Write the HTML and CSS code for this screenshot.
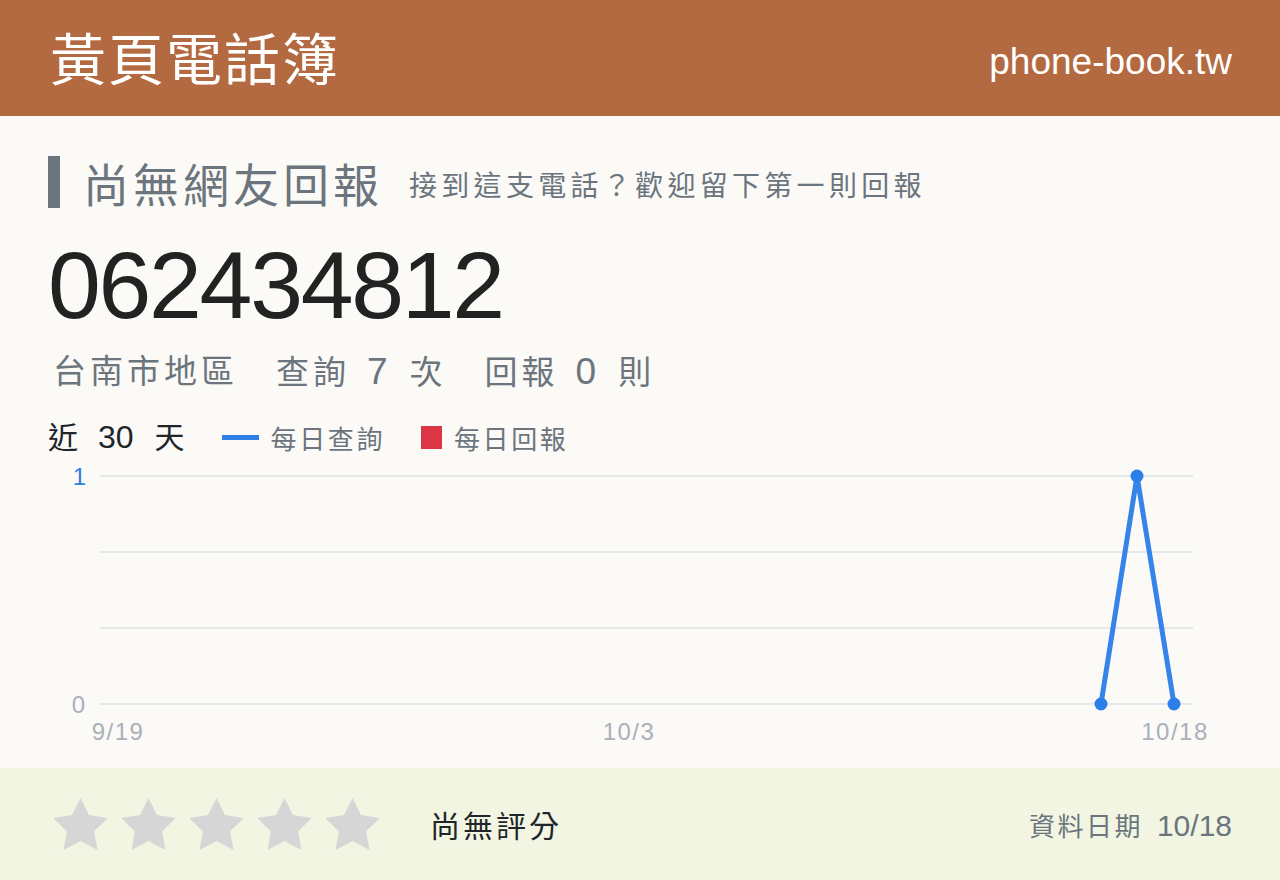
FILE: index.html
```html
<!DOCTYPE html>
<html lang="zh-Hant">
<head>
    <meta charset="UTF-8">
    <meta name="viewport" content="width=device-width, initial-scale=1.0">
    <title>062434812 - 黃頁電話簿</title>
    <link rel="stylesheet" href="styles.css">
</head>
<body>
    <!-- Site header -->
    <header class="topbar">
        <div class="brand">黃頁電話簿</div>
        <div class="domain">phone-book.tw</div>
    </header>

    <main class="content">
        <div class="headline">
            <span class="headline-bar"></span>
            <h1 class="headline-title">尚無網友回報</h1>
            <span class="headline-sub">接到這支電話？歡迎留下第一則回報</span>
        </div>

        <div class="number">062434812</div>

        <div class="stats">
            <span>台南市地區</span>
            <span>查詢<b class="num">7</b>次</span>
            <span>回報<b class="num">0</b>則</span>
        </div>

        <div class="legend">
            <span class="range">近<b class="num">30</b>天</span>
            <span class="legend-item"><i class="swatch-line"></i>每日查詢</span>
            <span class="legend-item"><i class="swatch-box"></i>每日回報</span>
        </div>

        <!-- Daily lookups, last 30 days -->
        <svg class="chart" width="1184" height="308" viewBox="0 0 1184 308">
            <g class="grid">
                <line x1="52" y1="16" x2="1145" y2="16"></line>
                <line x1="52" y1="92" x2="1145" y2="92"></line>
                <line x1="52" y1="168" x2="1145" y2="168"></line>
                <line x1="52" y1="244" x2="1145" y2="244"></line>
            </g>
            <text class="y-label y-max" x="38" y="25">1</text>
            <text class="y-label" x="37" y="253">0</text>
            <text class="x-label" x="70" y="280">9/19</text>
            <text class="x-label" x="581" y="280">10/3</text>
            <text class="x-label" x="1127" y="280">10/18</text>
            <polyline class="series" points="1053,244 1089,16 1126,244"></polyline>
            <circle class="dot" cx="1053" cy="244" r="6.5"></circle>
            <circle class="dot" cx="1089" cy="16" r="6.5"></circle>
            <circle class="dot" cx="1126" cy="244" r="6.5"></circle>
        </svg>
    </main>

    <!-- Rating bar -->
    <footer class="rating">
        <div class="stars">
            <svg class="star" viewBox="2 2 20 19.02"><path d="M12 2l3.09 6.26L22 9.27l-5 4.87 1.18 6.88L12 17.77l-6.18 3.25L7 14.14 2 9.27l6.91-1.01L12 2z"/></svg>
            <svg class="star" viewBox="2 2 20 19.02"><path d="M12 2l3.09 6.26L22 9.27l-5 4.87 1.18 6.88L12 17.77l-6.18 3.25L7 14.14 2 9.27l6.91-1.01L12 2z"/></svg>
            <svg class="star" viewBox="2 2 20 19.02"><path d="M12 2l3.09 6.26L22 9.27l-5 4.87 1.18 6.88L12 17.77l-6.18 3.25L7 14.14 2 9.27l6.91-1.01L12 2z"/></svg>
            <svg class="star" viewBox="2 2 20 19.02"><path d="M12 2l3.09 6.26L22 9.27l-5 4.87 1.18 6.88L12 17.77l-6.18 3.25L7 14.14 2 9.27l6.91-1.01L12 2z"/></svg>
            <svg class="star" viewBox="2 2 20 19.02"><path d="M12 2l3.09 6.26L22 9.27l-5 4.87 1.18 6.88L12 17.77l-6.18 3.25L7 14.14 2 9.27l6.91-1.01L12 2z"/></svg>
        </div>
        <div class="rating-text">尚無評分</div>
        <div class="updated">資料日期<span class="updated-date">10/18</span></div>
    </footer>
</body>
</html>
```

FILE: styles.css
```css
/* General */
body {
    margin: 0;
    width: 1280px;
    height: 880px;
    overflow: hidden;
    background: #fbfaf7;
    color: #212529;
    font-family: 'Liberation Sans', 'Noto Sans CJK TC', sans-serif;
    display: flex;
    flex-direction: column;
}

/* Header */
.topbar {
    height: 116px;
    flex-shrink: 0;
    background: #b46a41;
    color: #fff;
    display: flex;
    align-items: center;
    justify-content: space-between;
    padding: 0 48px 0 50px;
}
.brand {
    font-family: 'Noto Sans CJK TC', sans-serif;
    font-size: 56px;
    letter-spacing: 2px;
    line-height: 1;
    margin-top: -4px;
}
.domain {
    font-size: 37px;
    line-height: 1;
    margin-top: 6px;
}

/* Main block */
.content {
    flex: 1;
    min-height: 0;
    padding: 0 48px;
}
.headline {
    display: flex;
    align-items: center;
    height: 52px;
    margin-top: 40px;
    color: #6c757d;
}
.headline-bar {
    width: 12px;
    height: 52px;
    background: #6c757d;
    margin-right: 23px;
}
.headline-title {
    margin: 0 26px 0 0;
    font-family: 'Noto Sans CJK TC', sans-serif;
    font-weight: normal;
    font-size: 46px;
    letter-spacing: 4px;
    line-height: 1;
}
.headline-sub {
    font-family: 'Noto Sans CJK TC', sans-serif;
    font-size: 28px;
    letter-spacing: 4.3px;
    line-height: 1;
    margin-top: 4px;
}

.number {
    font-size: 95px;
    line-height: 1;
    letter-spacing: -2.3px;
    margin-top: 30px;
    color: #222;
}

.stats {
    display: flex;
    align-items: center;
    height: 40px;
    gap: 38px;
    margin-top: 19px;
    padding-left: 5px;
    font-size: 33px;
    line-height: 40px;
    letter-spacing: 4px;
    color: #6c757d;
}
.num {
    font-weight: normal;
    font-size: 37px;
    margin: 0 18px 0 17px;
}

/* Chart legend */
.legend {
    display: flex;
    align-items: center;
    height: 36px;
    margin-top: 27px;
}
.range {
    font-size: 30px;
    line-height: 36px;
    color: #212529;
    margin-right: 37px;
}
.range .num {
    font-size: 32px;
    margin: 0 21px 0 20px;
}
.legend-item {
    display: flex;
    align-items: center;
    font-size: 26px;
    letter-spacing: 2.6px;
    color: #6c757d;
    margin-right: 36px;
}
.swatch-line {
    width: 37px;
    height: 5px;
    background: #2d7fe8;
    margin-right: 12px;
}
.swatch-box {
    width: 21px;
    height: 23px;
    background: #dc3545;
    margin-right: 12px;
}

/* Chart */
.chart {
    display: block;
    margin-top: 5px;
}
.grid line {
    stroke: #e7e8ec;
    stroke-width: 2;
}
.y-label {
    font-family: 'Liberation Sans', sans-serif;
    font-size: 24px;
    fill: #a9b0b8;
    text-anchor: end;
}
.y-max {
    fill: #2d7fe8;
}
.x-label {
    font-family: 'Liberation Sans', sans-serif;
    font-size: 24px;
    letter-spacing: 1.5px;
    fill: #a9b0b8;
    text-anchor: middle;
}
.series {
    fill: none;
    stroke: #3584ea;
    stroke-width: 5;
    stroke-linejoin: round;
}
.dot {
    fill: #2d7fe8;
}

/* Rating bar */
.rating {
    height: 112px;
    flex-shrink: 0;
    background: #f2f5e2;
    display: flex;
    align-items: center;
    padding: 0 48px 0 53px;
}
.stars {
    display: flex;
    gap: 13px;
    margin-right: 50px;
}
.star {
    width: 55px;
    height: 52px;
    fill: #d6d6d6;
}
.rating-text {
    font-family: 'Noto Sans CJK TC', sans-serif;
    font-size: 30px;
    letter-spacing: 3px;
    color: #212529;
}
.updated {
    margin-left: auto;
    font-size: 26px;
    letter-spacing: 2.5px;
    color: #6c757d;
    display: flex;
    align-items: baseline;
}
.updated-date {
    font-size: 30px;
    letter-spacing: 0;
    margin-left: 14px;
}
```
